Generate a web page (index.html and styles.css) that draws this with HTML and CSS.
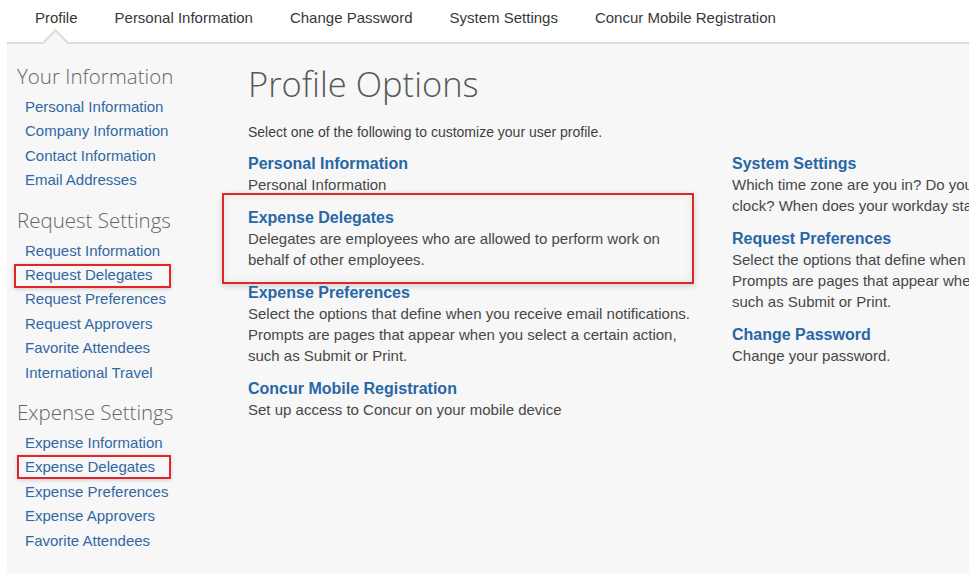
FILE: index.html
```html
<!DOCTYPE html>
<html lang="en">
<head>
<meta charset="utf-8">
<title>Profile Options</title>
<link rel="stylesheet" href="styles.css">
</head>
<body>
  <nav class="tabs">
    <a class="tab tab-active" href="#">Profile</a>
    <a class="tab" href="#">Personal Information</a>
    <a class="tab" href="#">Change Password</a>
    <a class="tab" href="#">System Settings</a>
    <a class="tab" href="#">Concur Mobile Registration</a>
  </nav>

  <div class="page">
    <aside class="sidebar">
      <h2 class="side-title">Your Information</h2>
      <ul class="side-links">
        <li><a href="#">Personal Information</a></li>
        <li><a href="#">Company Information</a></li>
        <li><a href="#">Contact Information</a></li>
        <li><a href="#">Email Addresses</a></li>
      </ul>

      <h2 class="side-title">Request Settings</h2>
      <ul class="side-links">
        <li><a href="#">Request Information</a></li>
        <li><a class="marked marked-request" href="#">Request Delegates</a></li>
        <li><a href="#">Request Preferences</a></li>
        <li><a href="#">Request Approvers</a></li>
        <li><a href="#">Favorite Attendees</a></li>
        <li><a href="#">International Travel</a></li>
      </ul>

      <h2 class="side-title">Expense Settings</h2>
      <ul class="side-links">
        <li><a href="#">Expense Information</a></li>
        <li><a class="marked marked-expense" href="#">Expense Delegates</a></li>
        <li><a href="#">Expense Preferences</a></li>
        <li><a href="#">Expense Approvers</a></li>
        <li><a href="#">Favorite Attendees</a></li>
      </ul>

      <h2 class="side-title">Other Settings</h2>
    </aside>

    <main class="main">
      <h1 class="page-title">Profile Options</h1>
      <p class="intro">Select one of the following to customize your user profile.</p>

      <div class="options">
        <div class="option-col">
          <div class="option">
            <a class="option-name" href="#">Personal Information</a>
            <p class="option-desc">Personal Information</p>
          </div>
          <div class="option option-marked">
            <a class="option-name" href="#">Expense Delegates</a>
            <p class="option-desc">Delegates are employees who are allowed to perform work on behalf of other employees.</p>
          </div>
          <div class="option">
            <a class="option-name" href="#">Expense Preferences</a>
            <p class="option-desc">Select the options that define when you receive email notifications. Prompts are pages that appear when you select a certain action, such as Submit or Print.</p>
          </div>
          <div class="option">
            <a class="option-name" href="#">Concur Mobile Registration</a>
            <p class="option-desc">Set up access to Concur on your mobile device</p>
          </div>
        </div>

        <div class="option-col">
          <div class="option">
            <a class="option-name" href="#">System Settings</a>
            <p class="option-desc">Which time zone are you in? Do you prefer a 12-hour or 24-hour clock? When does your workday start and end?</p>
          </div>
          <div class="option">
            <a class="option-name" href="#">Request Preferences</a>
            <p class="option-desc">Select the options that define when you receive email notifications. Prompts are pages that appear when you select a certain action, such as Submit or Print.</p>
          </div>
          <div class="option">
            <a class="option-name" href="#">Change Password</a>
            <p class="option-desc">Change your password.</p>
          </div>
        </div>
      </div>
    </main>
  </div>
</body>
</html>
```

FILE: styles.css
```css
* {
  box-sizing: border-box;
}

html,
body {
  margin: 0;
  height: 100%;
  overflow: hidden;
  background: #ffffff;
}

body {
  font-family: "Liberation Sans", Arial, sans-serif;
  font-size: 15px;
  color: #444444;
}

a {
  text-decoration: none;
}

/* ---- top tab strip ---- */
.tabs {
  display: flex;
  gap: 37px;
  height: 44px;
  margin-left: 7px;
  padding-left: 28px;
  border-bottom: 2px solid #dddddd;
  position: relative;
}

.tab {
  display: block;
  position: relative;
  padding-top: 9px;
  line-height: 18px;
  color: #383838;
  font-size: 15px;
}

/* notch under the active tab */
.tab-active::after {
  content: "";
  position: absolute;
  left: 50%;
  bottom: -10px;
  width: 17px;
  height: 17px;
  margin-left: -10px;
  background: #f7f7f7;
  border-top: 2px solid #dddddd;
  border-left: 2px solid #dddddd;
  transform: rotate(45deg);
}

/* ---- page body ---- */
.page {
  display: flex;
  margin-left: 7px;
  margin-top: -2px;
  padding-top: 2px;
  background: #f7f7f7;
  min-height: calc(100% - 42px);
}

.sidebar {
  width: 241px;
  flex: none;
  padding: 18px 0 0 10px;
}

.side-title {
  margin: 13px 0 5px;
  font-family: "Open Sans", "Liberation Sans", sans-serif;
  font-weight: 300;
  font-size: 20.5px;
  line-height: 28px;
  color: #666666;
}

.side-title:first-child {
  margin-top: 0;
}

.side-links {
  list-style: none;
  margin: 0;
  padding: 0 0 0 8px;
}

.side-links li {
  line-height: 24.4px;
}

.side-links a {
  color: #2f69a3;
  font-size: 15px;
}

/* red call-out frames */
.marked {
  position: relative;
}

.marked::after {
  content: "";
  position: absolute;
  top: -2px;
  bottom: -5px;
  border: 2px solid #e0262b;
  box-shadow: 0 1px 4px rgba(0, 0, 0, 0.18);
}

.marked-request::after {
  left: -11px;
  right: -18px;
}

.marked-expense::after {
  left: -8px;
  right: -16px;
  top: -3px;
  bottom: -4px;
}

/* ---- main area ---- */
.main {
  flex: 1;
  padding-top: 19px;
}

.page-title {
  margin: 0;
  font-family: "Open Sans", "Liberation Sans", sans-serif;
  font-weight: 300;
  font-size: 34.5px;
  line-height: 42px;
  color: #585858;
}

.intro {
  margin: 17px 0 0;
  line-height: 20px;
  font-size: 14px;
  color: #3f3f3f;
}

.options {
  display: flex;
  gap: 36px;
  margin-top: 11px;
}

.option-col {
  width: 448px;
  flex: none;
}

.option {
  position: relative;
  margin-bottom: 12px;
}

.option-name {
  display: block;
  font-weight: bold;
  font-size: 16px;
  line-height: 21px;
  color: #2866a6;
}

.option-desc {
  margin: 0;
  line-height: 21px;
  color: #474747;
}

.option-marked::after {
  content: "";
  position: absolute;
  left: -26px;
  right: 2px;
  top: -14px;
  bottom: -14px;
  border: 2px solid #e0262b;
  box-shadow: 0 2px 6px rgba(0, 0, 0, 0.16), inset 0 0 8px rgba(0, 0, 0, 0.08);
  pointer-events: none;
}
```
